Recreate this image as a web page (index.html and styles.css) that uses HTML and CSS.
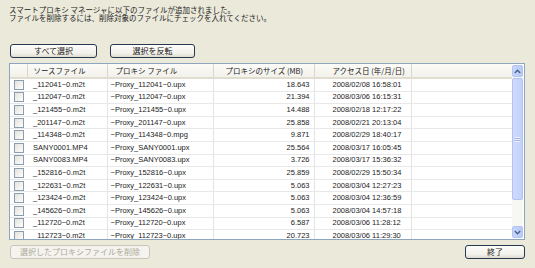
FILE: index.html
```html
<!DOCTYPE html>
<html lang="ja">
<head>
    <meta charset="UTF-8">
    <title>スマートプロキシ マネージャ</title>
    <link rel="stylesheet" href="styles.css">
</head>
<body>
    <div class="dialog">
        <div class="msg">
            <p>スマートプロキシ マネージャに以下のファイルが追加されました。</p>
            <p>ファイルを削除するには、削除対象のファイルにチェックを入れてください。</p>
        </div>
        <div class="toolbar">
            <button class="btn btn-select">すべて選択</button>
            <button class="btn btn-invert">選択を反転</button>
        </div>
        <div class="list">
            <div class="grid">
                <table>
                    <colgroup>
                        <col class="c-check"><col class="c-src"><col class="c-proxy"><col class="c-size"><col class="c-date"><col>
                    </colgroup>
                    <thead>
                        <tr>
                            <th></th>
                            <th class="h-src">ソースファイル</th>
                            <th class="h-proxy">プロキシ ファイル</th>
                            <th class="h-size">プロキシのサイズ (MB)</th>
                            <th class="h-date">アクセス日 (年/月/日)</th>
                            <th></th>
                        </tr>
                    </thead>
                    <tbody>
                        <tr><td><span class="check"></span></td><td class="src">_112041~0.m2t</td><td class="proxy">~Proxy_112041~0.upx</td><td class="size">18.643</td><td class="date">2008/02/08 16:58:01</td><td></td></tr>
                        <tr><td><span class="check"></span></td><td class="src">_112047~0.m2t</td><td class="proxy">~Proxy_112047~0.upx</td><td class="size">21.394</td><td class="date">2008/03/06 16:15:31</td><td></td></tr>
                        <tr><td><span class="check"></span></td><td class="src">_121455~0.m2t</td><td class="proxy">~Proxy_121455~0.upx</td><td class="size">14.488</td><td class="date">2008/02/18 12:17:22</td><td></td></tr>
                        <tr><td><span class="check"></span></td><td class="src">_201147~0.m2t</td><td class="proxy">~Proxy_201147~0.upx</td><td class="size">25.858</td><td class="date">2008/02/21 20:13:04</td><td></td></tr>
                        <tr><td><span class="check"></span></td><td class="src">_114348~0.m2t</td><td class="proxy">~Proxy_114348~0.mpg</td><td class="size">9.871</td><td class="date">2008/02/29 18:40:17</td><td></td></tr>
                        <tr><td><span class="check"></span></td><td class="src">SANY0001.MP4</td><td class="proxy">~Proxy_SANY0001.upx</td><td class="size">25.564</td><td class="date">2008/03/17 16:05:45</td><td></td></tr>
                        <tr><td><span class="check"></span></td><td class="src">SANY0083.MP4</td><td class="proxy">~Proxy_SANY0083.upx</td><td class="size">3.726</td><td class="date">2008/03/17 15:36:32</td><td></td></tr>
                        <tr><td><span class="check"></span></td><td class="src">_152816~0.m2t</td><td class="proxy">~Proxy_152816~0.upx</td><td class="size">25.859</td><td class="date">2008/02/29 15:50:34</td><td></td></tr>
                        <tr><td><span class="check"></span></td><td class="src">_122631~0.m2t</td><td class="proxy">~Proxy_122631~0.upx</td><td class="size">5.063</td><td class="date">2008/03/04 12:27:23</td><td></td></tr>
                        <tr><td><span class="check"></span></td><td class="src">_123424~0.m2t</td><td class="proxy">~Proxy_123424~0.upx</td><td class="size">5.063</td><td class="date">2008/03/04 12:36:59</td><td></td></tr>
                        <tr><td><span class="check"></span></td><td class="src">_145626~0.m2t</td><td class="proxy">~Proxy_145626~0.upx</td><td class="size">5.063</td><td class="date">2008/03/04 14:57:18</td><td></td></tr>
                        <tr><td><span class="check"></span></td><td class="src">_112720~0.m2t</td><td class="proxy">~Proxy_112720~0.upx</td><td class="size">6.587</td><td class="date">2008/03/06 11:28:12</td><td></td></tr>
                        <tr><td><span class="check"></span></td><td class="src">_112723~0.m2t</td><td class="proxy">~Proxy_112723~0.upx</td><td class="size">20.723</td><td class="date">2008/03/06 11:29:30</td><td></td></tr>
                    </tbody>
                </table>
            </div>
            <div class="scrollbar">
                <div class="sb-btn">
                    <svg width="7" height="5" viewBox="0 0 7 5"><polyline points="0.8,4 3.5,1.3 6.2,4" fill="none" stroke="#4d6185" stroke-width="1.4"/></svg>
                </div>
                <div class="sb-thumb"><span class="grip"></span></div>
                <div class="sb-track"></div>
                <div class="sb-btn">
                    <svg width="7" height="5" viewBox="0 0 7 5"><polyline points="0.8,1 3.5,3.7 6.2,1" fill="none" stroke="#4d6185" stroke-width="1.4"/></svg>
                </div>
            </div>
        </div>
        <div class="footer">
            <button class="btn btn-delete" disabled>選択したプロキシファイルを削除</button>
            <button class="btn btn-close">終了</button>
        </div>
    </div>
</body>
</html>
```

FILE: styles.css
```css
body {
    margin: 0;
    padding: 0;
    background-color: #ebe9da;
    color: #1a1a1a;
    font-family: 'Noto Sans CJK JP', 'Liberation Sans', sans-serif;
}
.dialog {
    width: 535px;
    height: 268px;
    padding: 0 10px 0 9px;
    box-sizing: border-box;
}
.msg {
    padding-top: 6px;
    font-size: 7.5px;
    line-height: 8px;
    color: #222;
}
.msg p {
    margin: 0;
    white-space: nowrap;
}
.toolbar {
    display: flex;
    gap: 13px;
    margin-top: 22px;
    padding-left: 1px;
}
.btn {
    height: 14px;
    padding: 0;
    font-family: 'Noto Sans CJK JP', sans-serif;
    font-size: 8px;
    line-height: 12px;
    color: #1a1a1a;
    background: linear-gradient(#fdfdfb, #f1f0ea 70%, #dedbd0);
    border: 1px solid #27384f;
    border-radius: 3px;
}
.btn-select {
    width: 87px;
}
.btn-invert {
    width: 85px;
}
.list {
    display: flex;
    height: 177px;
    margin-top: 5px;
    border: 1px solid #8ea5bf;
    background: #fff;
    box-sizing: border-box;
}
.grid {
    flex: 1;
    overflow: hidden;
}
table {
    width: 100%;
    border-collapse: collapse;
    table-layout: fixed;
    font-family: 'Liberation Sans', sans-serif;
    font-size: 7.5px;
    color: #222;
}
.c-check { width: 17px; }
.c-src { width: 80px; }
.c-proxy { width: 106px; }
.c-size { width: 101px; }
.c-date { width: 97px; }
th {
    height: 13px;
    padding: 0;
    font-family: 'Noto Sans CJK JP', sans-serif;
    font-size: 7.5px;
    font-weight: normal;
    text-align: left;
    white-space: nowrap;
    background: linear-gradient(#fbfbf8, #f2f1ea);
    border-right: 1px solid #d9d6ca;
    border-bottom: 2px solid #e0ddd0;
}
th:last-child {
    border-right: none;
}
.h-src { padding-left: 6px; }
.h-proxy { padding-left: 8px; }
.h-size { padding-left: 12px; }
.h-date { padding-left: 18px; }
td {
    height: 11.6px;
    padding: 0;
    white-space: nowrap;
    overflow: hidden;
    line-height: 10px;
    border-right: 1px solid #e4e4e4;
    border-bottom: 1px solid #e8e8e8;
}
td:last-child {
    border-right: none;
}
td:first-child {
    border-right: none;
    padding-left: 4px;
}
.check {
    display: block;
    width: 8px;
    height: 8px;
    border: 1px solid #8b9cb4;
    background: linear-gradient(135deg, #e4e3dc, #fdfdfc);
}
.src { padding-left: 6px; }
.proxy { padding-left: 3px; }
.size {
    text-align: right;
    padding-right: 4px;
}
.date { padding-left: 18px; }
.scrollbar {
    display: flex;
    flex-direction: column;
    width: 11px;
    margin: 1px 1px 1px 0;
    background: #f7f7f3;
}
.sb-btn {
    display: flex;
    align-items: center;
    justify-content: center;
    height: 12px;
    background: linear-gradient(90deg, #c8d6fc, #b7c9f6);
    border: 1px solid #b1c4f3;
    border-radius: 2px;
    box-sizing: border-box;
}
.sb-thumb {
    display: flex;
    align-items: center;
    justify-content: center;
    height: 120px;
    margin: 1px 0;
    background: linear-gradient(90deg, #cfdafc, #c3d1fa);
    border: 1px solid #b1c2f2;
    border-radius: 2px;
}
.grip {
    width: 5px;
    height: 5px;
    background: repeating-linear-gradient(#eef2fe 0 1px, #9fb1e6 1px 2px);
}
.sb-track {
    flex: 1;
}
.footer {
    display: flex;
    justify-content: space-between;
    margin-top: 5px;
    padding-left: 1px;
}
.btn-delete {
    width: 140px;
    color: #aca899;
    border-color: #c9c7ba;
    background: #f4f3ee;
}
.btn-close {
    width: 60px;
}
```
